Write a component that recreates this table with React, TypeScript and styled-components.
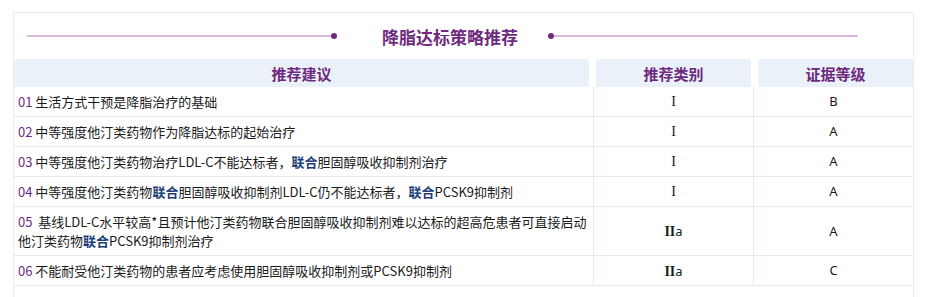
import styled, { createGlobalStyle } from 'styled-components';

const GlobalStyle = createGlobalStyle`
  body {
    margin: 0;
    background: #ffffff;
    font-family: "Noto Sans CJK SC", "Noto Sans", sans-serif;
  }
`;

const Page = styled.div`
  padding: 12px 15px 0 13px;
`;

const Card = styled.div`
  width: 899px;
  border: 1px solid #f4e6f4;
  border-bottom: none;
  padding-bottom: 12px;
  background: #fff;
`;

const TitleBar = styled.div`
  height: 46px;
  display: flex;
  align-items: center;
  padding-left: 13px;
`;

const Line = styled.div<{ $side: 'left' | 'right' }>`
  position: relative;
  width: 307px;
  height: 2px;
  background: #d8b8dc;

  &::after {
    content: '';
    position: absolute;
    top: -2px;
    ${({ $side }) => ($side === 'left' ? 'right: -3px;' : 'left: -3px;')}
    width: 6px;
    height: 6px;
    border-radius: 50%;
    background: #6d2a7e;
  }
`;

const Title = styled.h2`
  margin: 0 33px 0 48px;
  font-size: 17px;
  font-weight: 700;
  color: #6d2a7e;
  white-space: nowrap;
`;

const HeadRow = styled.div`
  display: grid;
  grid-template-columns: 575px 155px 155px;
  column-gap: 7px;
`;

const HeadCell = styled.div`
  height: 28px;
  display: flex;
  align-items: center;
  justify-content: center;
  background: #eaf1f8;
  border-radius: 3px 3px 0 0;
  font-size: 15px;
  font-weight: 700;
  color: #6d2a7e;
`;

const Row = styled.div`
  display: grid;
  grid-template-columns: 580px 160px 159px;
  border-bottom: 1px solid #f3e2f3;
`;

const Cell = styled.div<{ $center?: boolean }>`
  display: flex;
  align-items: center;
  justify-content: ${({ $center }) => ($center ? 'center' : 'flex-start')};
  padding: ${({ $center }) => ($center ? '0' : '5px 4px')};
  min-height: 19px;
  font-size: 13px;
  line-height: 19px;
  color: #1a1a1a;
  border-right: 1px solid #f3e2f3;

  &:last-child {
    border-right: none;
  }
`;

const Text = styled.p`
  margin: 0;
  line-height: 19px;
`;

const Num = styled.span`
  color: #6d2a7e;
`;

const Strong = styled.b`
  color: #1d3e78;
  font-weight: 700;
`;

const Roman = styled.span<{ $bold?: boolean }>`
  font-family: "Liberation Serif", "DejaVu Serif", serif;
  font-weight: ${({ $bold }) => ($bold ? 700 : 400)};
  font-size: 14px;
  color: #1a1a1a;
`;

const Letter = styled.span`
  font-family: "Noto Sans", "DejaVu Sans", sans-serif;
  font-size: 13px;
  color: #1a1a1a;
`;

type Rec = { no: string; text: React.ReactNode; cls: 'I' | 'IIa'; level: string };

const recs: Rec[] = [
  { no: '01', text: '生活方式干预是降脂治疗的基础', cls: 'I', level: 'B' },
  { no: '02', text: '中等强度他汀类药物作为降脂达标的起始治疗', cls: 'I', level: 'A' },
  {
    no: '03',
    text: (
      <>
        中等强度他汀类药物治疗LDL-C不能达标者，<Strong>联合</Strong>胆固醇吸收抑制剂治疗
      </>
    ),
    cls: 'I',
    level: 'A',
  },
  {
    no: '04',
    text: (
      <>
        中等强度他汀类药物<Strong>联合</Strong>胆固醇吸收抑制剂LDL-C仍不能达标者，<Strong>联合</Strong>PCSK9抑制剂
      </>
    ),
    cls: 'I',
    level: 'A',
  },
  {
    no: '05',
    text: (
      <>
        {'\u00a0'}基线LDL-C水平较高*且预计他汀类药物联合胆固醇吸收抑制剂难以达标的超高危患者可直接启动他汀类药物<Strong>联合</Strong>PCSK9抑制剂治疗
      </>
    ),
    cls: 'IIa',
    level: 'A',
  },
  { no: '06', text: '不能耐受他汀类药物的患者应考虑使用胆固醇吸收抑制剂或PCSK9抑制剂', cls: 'IIa', level: 'C' },
];

export default function App() {
  return (
    <Page>
      <GlobalStyle />
      <Card>
        <TitleBar>
          <Line $side="left" />
          <Title>降脂达标策略推荐</Title>
          <Line $side="right" />
        </TitleBar>
        <HeadRow>
          <HeadCell>推荐建议</HeadCell>
          <HeadCell>推荐类别</HeadCell>
          <HeadCell>证据等级</HeadCell>
        </HeadRow>
        {recs.map((r) => (
          <Row key={r.no}>
            <Cell>
              <Text>
                <Num>{r.no}</Num> {r.text}
              </Text>
            </Cell>
            <Cell $center>
              {r.cls === 'I' ? (
                <Roman>I</Roman>
              ) : (
                <span>
                  <Roman $bold>II</Roman>
                  <Letter>a</Letter>
                </span>
              )}
            </Cell>
            <Cell $center>
              <Letter>{r.level}</Letter>
            </Cell>
          </Row>
        ))}
      </Card>
    </Page>
  );
}
